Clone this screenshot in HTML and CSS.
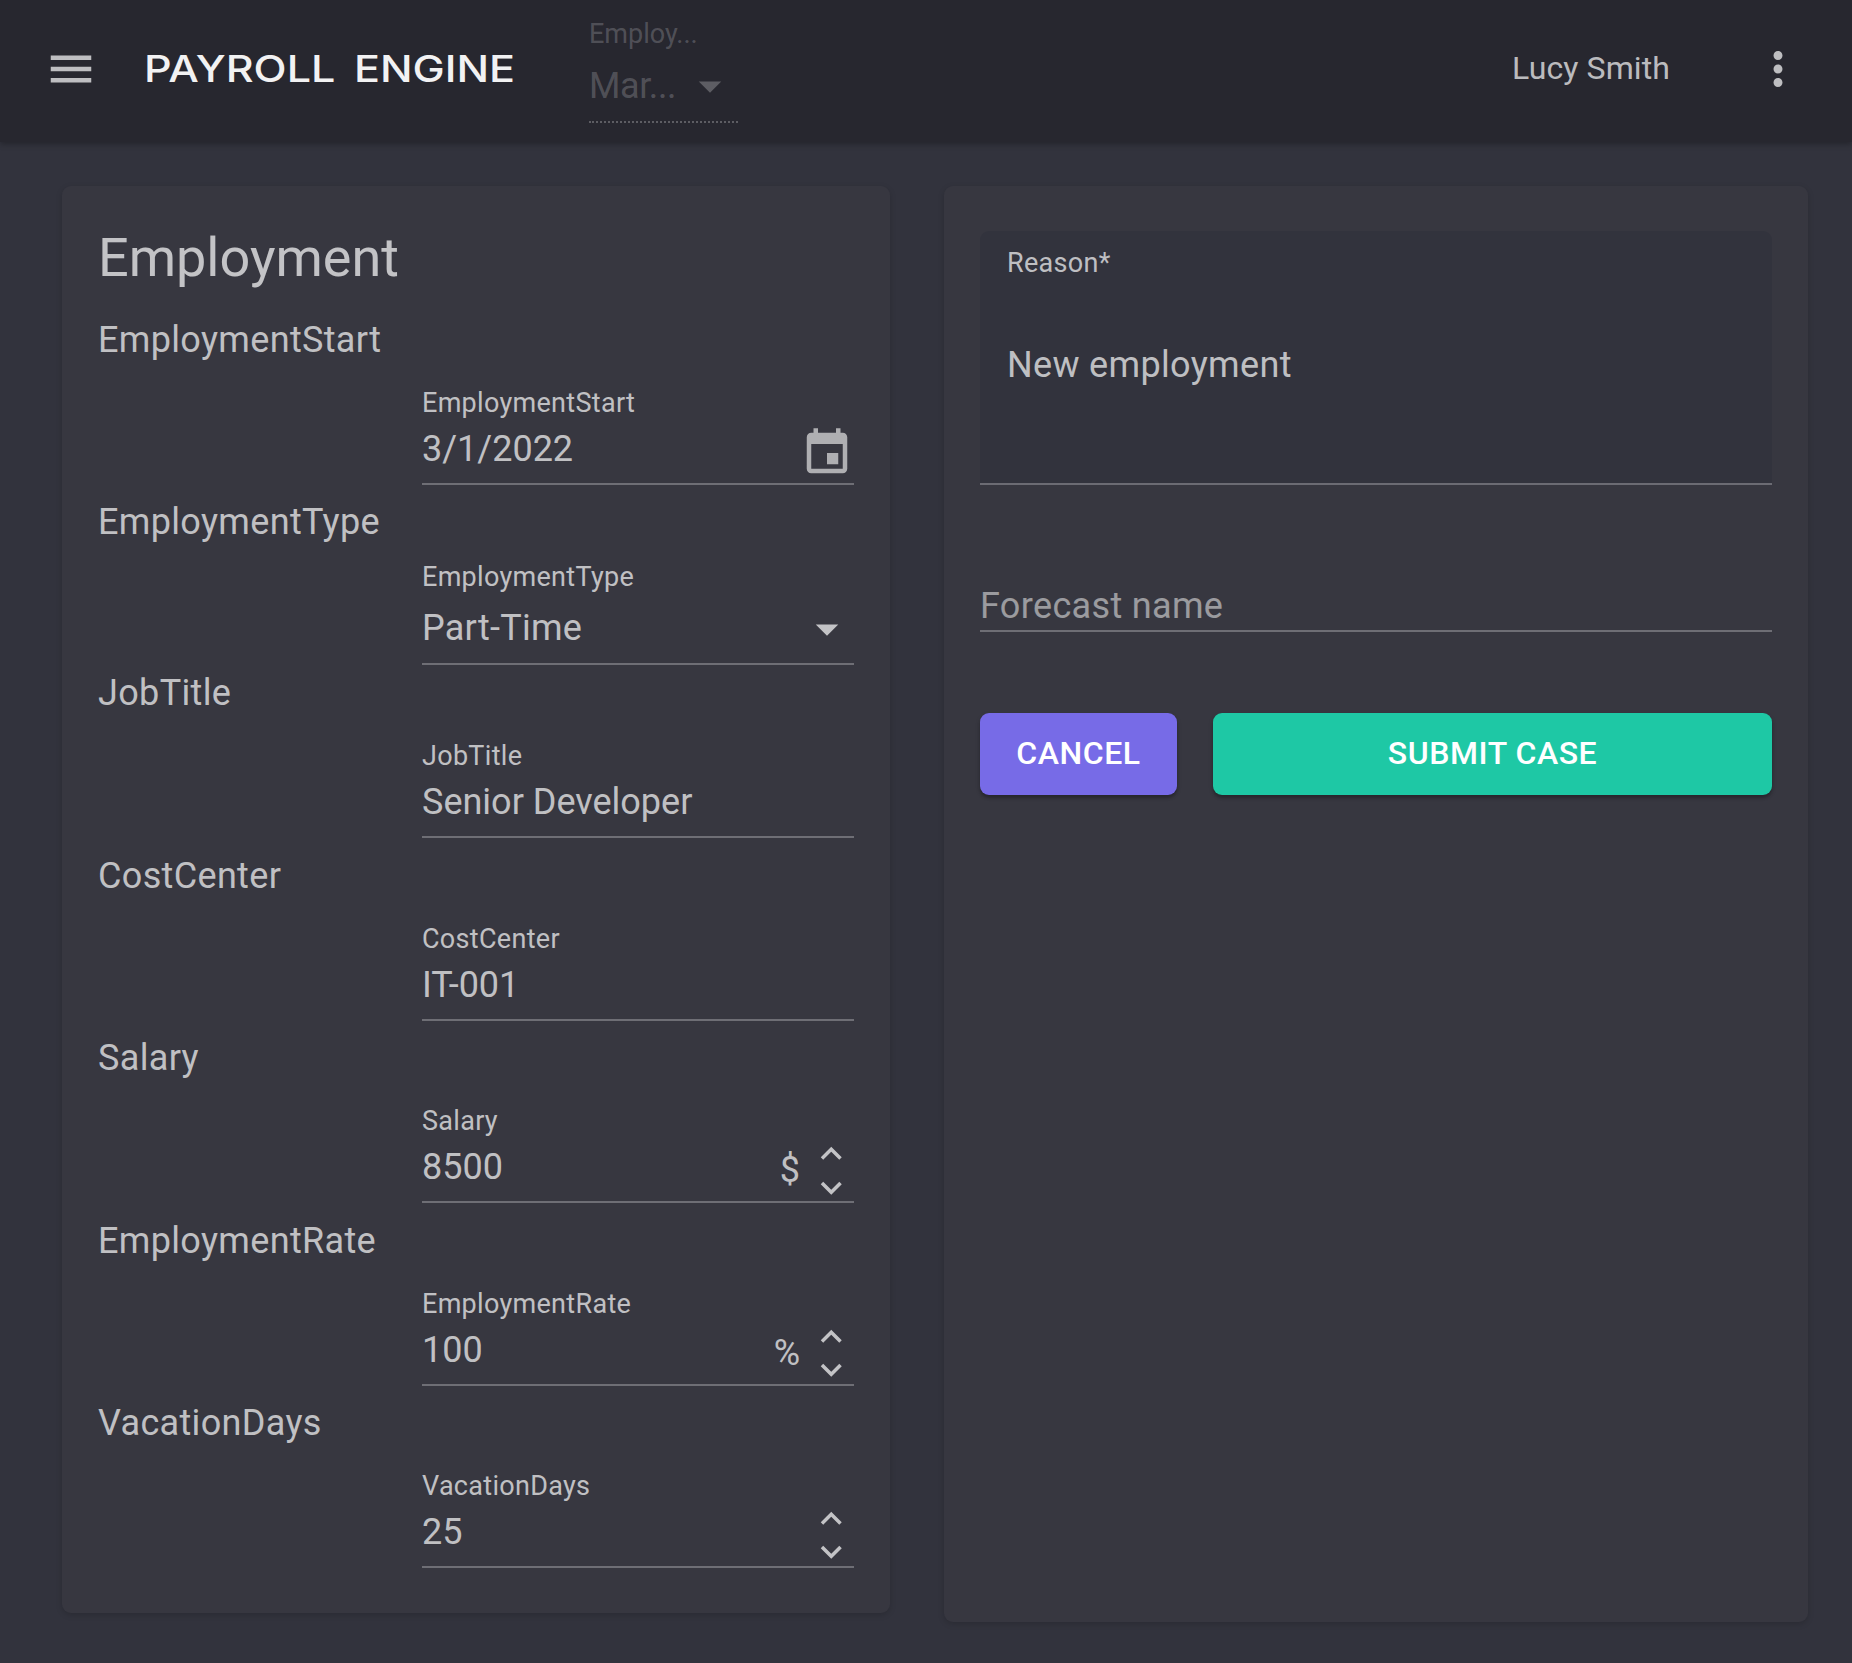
FILE: index.html
```html
<!DOCTYPE html>
<html lang="en">
<head>
<meta charset="utf-8">
<title>Payroll Engine</title>
<link rel="stylesheet" href="styles.css">
</head>
<body>
<header class="appbar">
  <svg class="icon menu-icon" viewBox="0 0 24 24"><path d="M3 18h18v-2H3v2zm0-5h18v-2H3v2zm0-7v2h18V6H3z"/></svg>
  <div class="logo">PAYROLL ENGINE</div>
  <div class="nav-select">
    <div class="nav-select-label">Employ...</div>
    <div class="nav-select-value"><span class="nav-value-text">Mar...</span><svg class="nav-arrow" viewBox="0 0 24 24"><path d="M7 10l5 5 5-5z"/></svg></div>
  </div>
  <div class="user">Lucy Smith</div>
  <svg class="icon more-icon" viewBox="0 0 24 24"><path d="M12 8c1.1 0 2-.9 2-2s-.9-2-2-2-2 .9-2 2 .9 2 2 2zm0 2c-1.1 0-2 .9-2 2s.9 2 2 2 2-.9 2-2-.9-2-2-2zm0 6c-1.1 0-2 .9-2 2s.9 2 2 2 2-.9 2-2-.9-2-2-2z"/></svg>
</header>
<main class="content">
  <section class="card case-card">
    <h1 class="case-title">Employment</h1>

    <div class="case-row">
      <div class="row-title">EmploymentStart</div>
      <div class="field">
        <div class="field-label">EmploymentStart</div>
        <div class="field-value">3/1/2022</div>
        <svg class="calendar" viewBox="0 0 24 24"><path d="M17 12h-5v5h5v-5zM16 1v2H8V1H6v2H5c-1.11 0-1.99.9-1.99 2L3 19c0 1.1.89 2 2 2h14c1.1 0 2-.9 2-2V5c0-1.1-.9-2-2-2h-1V1h-2zm3 18H5V8h14v11z"/></svg>
      </div>
    </div>

    <div class="case-row row-select">
      <div class="row-title">EmploymentType</div>
      <div class="field field-select">
        <div class="field-label">EmploymentType</div>
        <div class="field-value">Part-Time</div>
        <svg class="select-arrow" viewBox="0 0 24 24"><path d="M7 10l5 5 5-5z"/></svg>
      </div>
    </div>

    <div class="case-row">
      <div class="row-title">JobTitle</div>
      <div class="field">
        <div class="field-label">JobTitle</div>
        <div class="field-value">Senior Developer</div>
      </div>
    </div>

    <div class="case-row">
      <div class="row-title">CostCenter</div>
      <div class="field">
        <div class="field-label">CostCenter</div>
        <div class="field-value">IT-001</div>
      </div>
    </div>

    <div class="case-row">
      <div class="row-title">Salary</div>
      <div class="field">
        <div class="field-label">Salary</div>
        <div class="field-value">8500</div>
        <span class="adorn">$</span>
        <div class="spin">
          <svg viewBox="5 7 14 10"><path d="M7.41 15.41L12 10.83l4.59 4.58L18 14l-6-6-6 6z"/></svg>
          <svg viewBox="5 7 14 10"><path d="M7.41 8.59L12 13.17l4.59-4.58L18 10l-6 6-6-6z"/></svg>
        </div>
      </div>
    </div>

    <div class="case-row">
      <div class="row-title">EmploymentRate</div>
      <div class="field">
        <div class="field-label">EmploymentRate</div>
        <div class="field-value">100</div>
        <span class="adorn">%</span>
        <div class="spin">
          <svg viewBox="5 7 14 10"><path d="M7.41 15.41L12 10.83l4.59 4.58L18 14l-6-6-6 6z"/></svg>
          <svg viewBox="5 7 14 10"><path d="M7.41 8.59L12 13.17l4.59-4.58L18 10l-6 6-6-6z"/></svg>
        </div>
      </div>
    </div>

    <div class="case-row last-row">
      <div class="row-title">VacationDays</div>
      <div class="field">
        <div class="field-label">VacationDays</div>
        <div class="field-value">25</div>
        <div class="spin">
          <svg viewBox="5 7 14 10"><path d="M7.41 15.41L12 10.83l4.59 4.58L18 14l-6-6-6 6z"/></svg>
          <svg viewBox="5 7 14 10"><path d="M7.41 8.59L12 13.17l4.59-4.58L18 10l-6 6-6-6z"/></svg>
        </div>
      </div>
    </div>
  </section>

  <section class="card submit-card">
    <div class="reason">
      <div class="reason-label">Reason*</div>
      <div class="reason-value">New employment</div>
    </div>
    <div class="forecast">Forecast name</div>
    <div class="actions">
      <button class="btn btn-cancel" type="button">CANCEL</button>
      <button class="btn btn-submit" type="button">SUBMIT CASE</button>
    </div>
  </section>
</main>
</body>
</html>
```
FILE: styles.css
```css
* { box-sizing: border-box; }
html, body { margin: 0; padding: 0; }
body {
  background: #32333d;
  color: rgba(255,255,255,.7);
  font-family: Roboto, "Liberation Sans", sans-serif;
  min-height: 1663px;
}
.icon { width: 54px; height: 54px; fill: rgba(255,255,255,.7); flex: none; }

.appbar {
  height: 142px;
  background: #27272f;
  box-shadow: 0 2px 6px rgba(0,0,0,.3);
  display: flex;
  align-items: center;
  padding-left: 44px;
  position: relative;
}
.menu-icon { margin-top: -4px; }
.logo {
  margin-left: 46px;
  width: 372px;
  color: #f2f2f3;
  font-family: Inter, sans-serif;
  font-size: 37px;
  line-height: 40px;
  font-weight: 500;
  word-spacing: 6px;
  white-space: nowrap;
  margin-top: -4px;
  transform: scaleX(1.165);
  transform-origin: left center;
}
.nav-select {
  margin-left: 73px;
  width: 149px;
  height: 123px;
  border-bottom: 2px dotted rgba(255,255,255,.25);
  color: rgba(255,255,255,.2);
  align-self: flex-start;
  padding-top: 16px;
}
.nav-select-label { font-size: 27px; line-height: 36px; }
.nav-select-value {
  display: flex;
  align-items: center;
  font-size: 36px;
  line-height: 54px;
  margin-top: 7px;
}
.nav-value-text { letter-spacing: -.4px; }
.nav-arrow { width: 54px; height: 54px; fill: rgba(255,255,255,.25); margin-left: 7px; flex: none; }
.user {
  margin-left: auto;
  font-size: 32px;
  letter-spacing: .1px;
  line-height: 40px;
  margin-top: -6px;
}
.more-icon { margin-left: 81px; margin-right: 47px; margin-top: -4px; }

.content {
  display: grid;
  grid-template-columns: 828px 864px;
  column-gap: 54px;
  align-items: start;
  padding: 44px 44px 0 62px;
}
.card {
  background: #373740;
  border-radius: 9px;
  box-shadow: 0 2px 6px rgba(0,0,0,.16);
}
.case-card { padding: 29px 36px 46px; height: 1427px; }
.case-title {
  margin: 0 0 12px;
  font-size: 54px;
  line-height: 86px;
  font-weight: 400;
}
.case-row { margin-bottom: 10.4px; }
.row-select { margin-bottom: 1px; }
.last-row { margin-bottom: 0; }
.row-title { font-size: 36px; line-height: 54px; letter-spacing: .34px; }
.field {
  margin-left: 324px;
  height: 118px;
  border-bottom: 2px solid rgba(255,255,255,.28);
  position: relative;
  padding-top: 18px;
}
.field-select { height: 116px; padding-top: 10px; }
.field-label { font-size: 27px; line-height: 36px; letter-spacing: .3px; }
.field-value { font-size: 36px; line-height: 46px; margin-top: 5px; }
.field-select .field-value { margin-top: 10px; letter-spacing: .25px; }
.calendar {
  position: absolute;
  width: 54px; height: 54px;
  right: 0; top: 59px;
  fill: rgba(255,255,255,.6);
}
.select-arrow {
  position: absolute;
  width: 54px; height: 54px;
  right: 0; top: 53px;
  fill: rgba(255,255,255,.7);
}
.adorn {
  position: absolute;
  right: 54px;
  top: 63px;
  font-size: 36px;
  line-height: 44px;
}
.spin {
  position: absolute;
  right: 11px;
  top: 60px;
  display: flex;
  flex-direction: column;
  gap: 16px;
}
.spin svg { width: 24.5px; height: 17.5px; fill: rgba(255,255,255,.7); display: block; }

.submit-card { padding: 45px 36px 0; height: 1436px; }
.reason {
  height: 254px;
  background: #32333d;
  border-radius: 9px 9px 0 0;
  border-bottom: 2px solid rgba(255,255,255,.28);
  padding: 14px 27px 0;
}
.reason-label { font-size: 27px; line-height: 36px; letter-spacing: .3px; }
.reason-value { font-size: 36px; line-height: 46px; margin-top: 61px; letter-spacing: .34px; }
.forecast {
  margin-top: 99px;
  height: 48px;
  font-size: 36px;
  line-height: 44px;
  letter-spacing: .34px;
  color: rgba(255,255,255,.5);
  border-bottom: 2px solid rgba(255,255,255,.28);
}
.actions { display: flex; gap: 36px; margin-top: 81px; }
.btn {
  height: 82px;
  border: 0;
  border-radius: 9px;
  color: #fff;
  font-family: inherit;
  font-size: 32px;
  font-weight: 500;
  letter-spacing: .55px;
  padding-bottom: 3px;
  box-shadow: 0 3px 3px rgba(0,0,0,.2), 0 2px 5px rgba(0,0,0,.14);
}
.btn-cancel { width: 197px; background: #776be7; }
.btn-submit { flex: 1; background: #1ec8a5; }
```
